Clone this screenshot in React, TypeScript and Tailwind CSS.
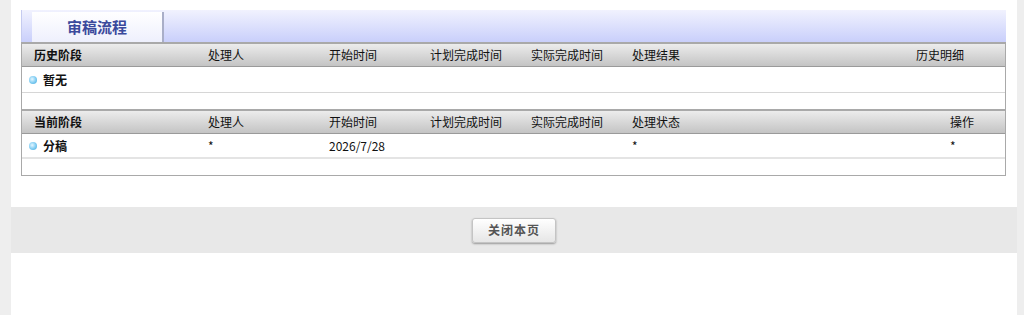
import React from "react";

const font = { fontFamily: '"Noto Sans CJK SC", "Noto Sans", sans-serif' };

function Dot() {
  return (
    <span className="inline-block w-[8px] h-[8px] rounded-full mr-[6px] bg-[radial-gradient(circle_at_40%_40%,#e6f7ff_0%,#8fd3f5_45%,#3aa6dc_100%)]" />
  );
}

function HeaderRow({ cols, tpl }: { cols: string[]; tpl: string }) {
  return (
    <div
      className={`grid ${tpl} h-[25px] items-center border-t-[2px] border-[#a9a9a9] bg-gradient-to-b from-[#ececec] to-[#c4c4c4] border-b border-b-[#9a9a9a] pl-[12px] text-[12px] text-[#111]`}
    >
      {cols.map((c, i) => (
        <div key={i} className={i === 0 ? "font-bold" : ""}>
          {c}
        </div>
      ))}
    </div>
  );
}

export default function App() {
  const tpl1 = "grid-cols-[174px_121px_101px_101px_101px_284px_1fr]";
  const tpl2 = "grid-cols-[174px_121px_101px_101px_101px_318px_1fr]";
  return (
    <div className="w-[1024px] h-[315px] bg-[#eeeeee] flex" style={font}>
      <div className="ml-[11px] w-[1006px] h-full bg-white pt-[10px]">
        <div className="mx-[10px] w-[985px]">
          {/* tab strip */}
          <div className="h-[32px] bg-gradient-to-b from-[#f1f2fe] to-[#c9cffb] flex items-end pl-[10px] border-l border-l-[#c5cbf0]">
            <div className="w-[132px] h-[30px] bg-gradient-to-b from-white to-[#eef0fd] border-r-[2px] border-r-[#a9aec8] flex items-center justify-center text-[15px] font-bold text-[#3b4a9c]">
              审稿流程
            </div>
          </div>
          {/* table */}
          <div className="border-x border-b border-[#a9a9a9]">
            <HeaderRow
              tpl={tpl1}
              cols={["历史阶段", "处理人", "开始时间", "计划完成时间", "实际完成时间", "处理结果", "历史明细"]}
            />
            <div className="h-[26px] flex items-center pl-[7px] border-b border-[#d6d6d6] text-[12px] font-bold text-[#111]">
              <Dot />
              暂无
            </div>
            <div className="h-[16px]" />
            <HeaderRow
              tpl={tpl2}
              cols={["当前阶段", "处理人", "开始时间", "计划完成时间", "实际完成时间", "处理状态", "操作"]}
            />
            <div className={`grid ${tpl2} h-[25px] items-center border-b-[2px] border-[#e4e4e4] text-[12px] text-[#111]`}>
              <div className="flex items-center pl-[7px] font-bold">
                <Dot />
                分稿
              </div>
              <div className="pl-[12px]">*</div>
              <div className="pl-[12px]">2026/7/28</div>
              <div />
              <div />
              <div className="pl-[12px]">*</div>
              <div className="pl-[12px]">*</div>
            </div>
            <div className="h-[16px]" />
          </div>
        </div>
        {/* footer */}
        <div className="mt-[31px] h-[46px] bg-[#e8e8e8] flex items-center justify-center">
          <button className="w-[84px] h-[25px] rounded-[3px] border border-[#c4c4c4] bg-gradient-to-b from-white to-[#e6e6e6] shadow-[0_1px_2px_rgba(0,0,0,0.35)] text-[12px] font-bold text-[#555] tracking-[1px]">
            关闭本页
          </button>
        </div>
      </div>
    </div>
  );
}
